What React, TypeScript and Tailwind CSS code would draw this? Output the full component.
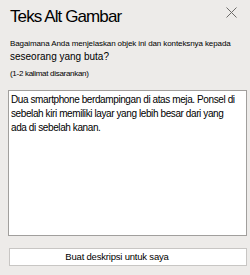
export default function App() {
  return (
    <div
      className="flex h-[275px] w-[250px] flex-col bg-[#edebe9] text-black"
      style={{ fontFamily: '"Liberation Sans", Arial, sans-serif' }}
    >
      <header className="flex h-[27px] items-start justify-between pl-[10px] pr-[13px] pt-[6px]">
        <h1 className="whitespace-nowrap text-[17px] leading-[21px] tracking-[-0.9px]">Teks Alt Gambar</h1>
        <button className="mt-[1px] text-[#6d6b69]">
          <svg width="11" height="11" viewBox="0 0 11 11" fill="none" stroke="currentColor" strokeWidth="1">
            <path d="M0.5 0.5l10 10M10.5 0.5l-10 10" />
          </svg>
        </button>
      </header>
      <div className="mt-[10px] pl-[10px]">
        <p className="whitespace-nowrap text-[8px] leading-[13px] tracking-[-0.1px]">
          Bagaimana Anda menjelaskan objek ini dan konteksnya kepada
        </p>
        <p className="whitespace-nowrap text-[10px] leading-[13px]">seseorang yang buta?</p>
        <p className="mt-[5px] whitespace-nowrap text-[8px] leading-[12px] tracking-[-0.3px]">
          (1-2 kalimat disarankan)
        </p>
      </div>
      <div className="ml-[8px] mr-[3px] mt-[10px] h-[146px] border border-[#a19f9d] bg-white px-[2px] pt-[2px]">
        <p className="whitespace-nowrap text-[10px] leading-[14px] tracking-[-0.4px]">
          Dua smartphone berdampingan di atas meja. Ponsel di
          <br />
          sebelah kiri memiliki layar yang lebih besar dari yang
          <br />
          ada di sebelah kanan.
        </p>
      </div>
      <button className="ml-[9px] mr-[3px] mt-[12px] h-[18px] border border-[#c8c6c4] bg-white pr-[22px] text-[9.5px] leading-[16px] tracking-[-0.2px]">
        Buat deskripsi untuk saya
      </button>
    </div>
  );
}
